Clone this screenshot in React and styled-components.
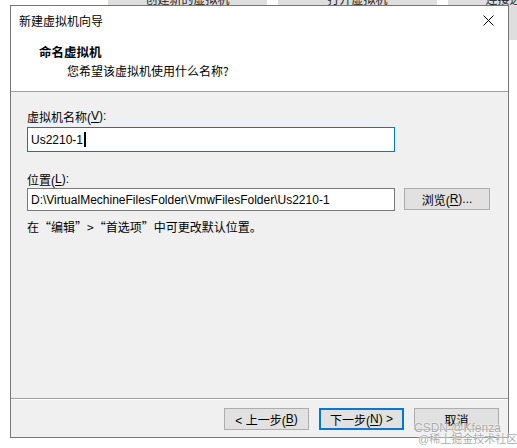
import React from 'react';
import styled, {createGlobalStyle} from 'styled-components';

const GlobalStyle = createGlobalStyle`
    html, body {
        margin: 0;
        padding: 0;
        background: #fff;
    }
    body {
        font-family: "Liberation Sans", "Noto Sans CJK SC", sans-serif;
        font-size: 12px;
        color: #000;
    }
`;

const Page = styled.div`
    position: relative;
    width: 517px;
    height: 448px;
    overflow: hidden;
    background: #fff;
`;

const Backdrop = styled.div`
    display: flex;
    gap: 11px;
    padding-left: 108px;
`;

const BackTile = styled.div`
    flex: 0 0 ${props => props.width}px;
    height: 40px;
    background: #dedede;
    display: flex;
    justify-content: center;
    font-family: "Noto Sans CJK SC", sans-serif;
    font-size: 12px;
    line-height: 16px;
    color: #222;

    span {
        margin-top: -9px;
    }
`;

const Dialog = styled.div`
    position: absolute;
    left: 10px;
    top: 5px;
    width: 499px;
    height: 433px;
    box-sizing: border-box;
    border: 1px solid #767676;
    background: #f0f0f0;
    display: flex;
    flex-direction: column;
`;

const TitleBar = styled.div`
    height: 29px;
    background: #fff;
    display: flex;
    align-items: center;
    justify-content: space-between;
    padding: 0 10px 0 8px;
`;

const TitleText = styled.span`
    font-family: "Noto Sans CJK SC", sans-serif;
    font-size: 12px;
    color: #000;
`;

const CloseButton = styled.div`
    width: 12px;
    height: 12px;
    display: flex;
    align-items: center;
    justify-content: center;
    margin-right: 4px;
`;

const Header = styled.div`
    height: 57px;
    background: #fff;
    border-bottom: 1px solid #a0a0a0;
    padding: 8px 0 0 28px;
    box-sizing: border-box;
`;

const HeaderTitle = styled.div`
    font-family: "Noto Sans CJK SC", sans-serif;
    font-weight: bold;
    font-size: 12.5px;
    line-height: 18px;
`;

const HeaderSub = styled.div`
    font-family: "Noto Sans CJK SC", sans-serif;
    font-size: 12px;
    line-height: 20px;
    padding-left: 28px;
`;

const Body = styled.div`
    flex: 1;
    padding: 15px 16px 0 16px;
    display: flex;
    flex-direction: column;
`;

const Label = styled.div`
    height: 18px;
    display: flex;
    align-items: center;
    font-size: 12px;
    margin-bottom: ${props => props.gap || 0}px;

    u {
        text-decoration: underline;
        text-underline-offset: 2px;
    }
`;

const Field = styled.div`
    height: ${props => props.height}px;
    box-sizing: border-box;
    border: 1px solid ${props => props.focused ? '#0078d7' : '#7a7a7a'};
    background: #fff;
    display: flex;
    align-items: center;
    padding-left: 3px;
    font-size: 12px;
    white-space: nowrap;
    overflow: hidden;
    flex: ${props => props.grow ? 1 : 'none'};
`;

const Caret = styled.span`
    display: inline-block;
    width: 2px;
    height: 15px;
    background: #000;
    margin-left: 1px;
`;

const Row = styled.div`
    display: flex;
    align-items: flex-start;
    gap: 9px;
    margin-right: 2px;
`;

const NameRow = styled.div`
    width: 368px;
    margin-bottom: 18px;
`;

const Button = styled.div`
    width: ${props => props.width}px;
    height: ${props => props.height || 22}px;
    box-sizing: border-box;
    background: #e1e1e1;
    border: ${props => props.primary ? '2px solid #0078d7' : '1px solid #adadad'};
    display: flex;
    align-items: center;
    justify-content: center;
    font-size: 12px;
    color: #000;
    flex: none;

    u {
        text-decoration: underline;
        text-underline-offset: 2px;
    }
`;

const Note = styled.div`
    font-family: "Noto Sans CJK SC", sans-serif;
    font-size: 12px;
    height: 18px;
    display: flex;
    align-items: center;
    margin-top: 6px;
`;

const Footer = styled.div`
    border-top: 1px solid #a0a0a0;
    box-shadow: inset 0 1px 0 #fff;
    height: 39px;
    box-sizing: border-box;
    display: flex;
    align-items: center;
    justify-content: flex-end;
    gap: 10px;
    padding: 2px 9px 0 0;
`;

const Watermark = styled.div`
    position: absolute;
    left: 414px;
    top: 422px;
    color: rgba(140, 140, 140, 0.75);
    text-shadow: 0 0 2px #fff, 0 0 1px #fff;
    pointer-events: none;
`;

const MarkLine = styled.div`
    font-size: ${props => props.size}px;
    line-height: ${props => props.size}px;
    padding-left: ${props => props.indent || 0}px;
    white-space: nowrap;
`;

export default function App() {
    return (
        <Page>
            <GlobalStyle />
            <Backdrop>
                <BackTile width={159}><span>创建新的虚拟机</span></BackTile>
                <BackTile width={159}><span>打开虚拟机</span></BackTile>
                <BackTile width={159}><span>连接远程服务器</span></BackTile>
            </Backdrop>

            <Dialog>
                <TitleBar>
                    <TitleText>新建虚拟机向导</TitleText>
                    <CloseButton>
                        <svg width="11" height="11" viewBox="0 0 11 11">
                            <path d="M0.5 0.5 L10.5 10.5 M10.5 0.5 L0.5 10.5" stroke="#000" strokeWidth="1" />
                        </svg>
                    </CloseButton>
                </TitleBar>

                <Header>
                    <HeaderTitle>命名虚拟机</HeaderTitle>
                    <HeaderSub>您希望该虚拟机使用什么名称?</HeaderSub>
                </Header>

                <Body>
                    <Label gap={2}>虚拟机名称(<u>V</u>):</Label>
                    <NameRow>
                        <Field height={25} focused>
                            Us2210-1<Caret />
                        </Field>
                    </NameRow>

                    <Label>位置(<u>L</u>):</Label>
                    <Row>
                        <Field height={23} grow>D:\VirtualMechineFilesFolder\VmwFilesFolder\Us2210-1</Field>
                        <Button width={86} height={22}>浏览(<u>R</u>)...</Button>
                    </Row>
                    <Note>在“编辑”&gt;“首选项”中可更改默认位置。</Note>
                </Body>

                <Footer>
                    <Button width={85}>&lt; 上一步(<u>B</u>)</Button>
                    <Button width={85} primary>下一步(<u>N</u>) &gt;</Button>
                    <Button width={85}>取消</Button>
                </Footer>
            </Dialog>

            <Watermark>
                <MarkLine size={12}>CSDN @Kfenza</MarkLine>
                <MarkLine size={11} indent={4}>@稀土掘金技术社区</MarkLine>
            </Watermark>
        </Page>
    );
}
